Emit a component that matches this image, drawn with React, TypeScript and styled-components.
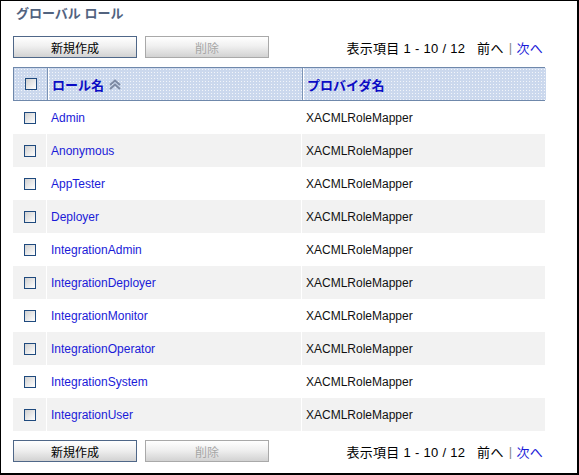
import React from 'react';
import styled, { createGlobalStyle } from 'styled-components';

const GlobalStyle = createGlobalStyle`
  body {
    margin: 0;
    background: #fff;
    font-family: "Liberation Sans", "Noto Sans CJK JP", sans-serif;
  }
`

const Frame = styled.div`
  box-sizing: border-box;
  width: 579px;
  height: 475px;
  border: 1px solid #000;
  border-right-width: 2px;
  border-bottom-width: 2px;
  padding-left: 12px;
  background: #fff;
`

const Title = styled.h1`
  margin: 0;
  padding: 5px 0 0 3px;
  font-size: 13px;
  line-height: 16px;
  font-weight: 700;
  color: #52637f;
`

const Toolbar = styled.div<{ $top: number }>`
  display: flex;
  align-items: center;
  width: 532px;
  height: 22px;
  margin-top: ${p => p.$top}px;
  gap: 8px;
`

const Button = styled.button<{ $disabled?: boolean }>`
  box-sizing: border-box;
  width: 124px;
  height: 22px;
  padding: 0;
  border: 1px solid ${p => (p.$disabled ? '#a9a9a9' : '#4f6788')};
  background: linear-gradient(#ffffff, #f0f0f0 45%, #d2d2d2);
  color: ${p => (p.$disabled ? '#a6a6a6' : '#000')};
  font-family: "Liberation Sans", "Noto Sans CJK JP", sans-serif;
  font-size: 12px;
  cursor: pointer;
`

const Paging = styled.div`
  margin-left: auto;
  padding-right: 2px;
  display: flex;
  align-items: center;
  font-size: 13px;
  letter-spacing: 0.3px;
  color: #000;
  white-space: pre;
`

const Sep = styled.span`
  color: #888;
  margin: 0 4px 0 5px;
`

const NextLink = styled.a`
  color: #1a1ad8;
  text-decoration: none;
`

const Table = styled.div`
  width: 532px;
  margin-top: 9px;
`

const HeaderRow = styled.div`
  display: grid;
  grid-template-columns: 33px 255px 244px;
  height: 34px;
  box-sizing: border-box;
  border-top: 1px solid #6f88ab;
  border-bottom: 1px solid #6f88ab;
  border-left: 1px solid #6f88ab;
`

const HeaderCell = styled.div<{ $first?: boolean }>`
  display: flex;
  align-items: center;
  justify-content: ${p => (p.$first ? 'center' : 'flex-start')};
  padding-left: ${p => (p.$first ? 0 : 4)}px;
  gap: 5px;
  background-color: #cbd8ed;
  background-image: radial-gradient(circle, rgba(255, 255, 255, 0.75) 0.7px, transparent 0.9px);
  background-size: 3px 3px;
  border-left: ${p => (p.$first ? 'none' : '1px solid #7c94b6')};
  box-shadow: ${p => (p.$first ? 'none' : 'inset 1px 0 0 #fff')};
  font-size: 13px;
  font-weight: 700;
  color: #0b0bc4;
`

const Row = styled.div`
  display: grid;
  grid-template-columns: 33px 255px 244px;
  height: 33px;
`

const Cell = styled.div<{ $even: boolean; $first?: boolean }>`
  display: flex;
  align-items: center;
  justify-content: ${p => (p.$first ? 'center' : 'flex-start')};
  padding-left: ${p => (p.$first ? 1 : 4)}px;
  margin-left: ${p => (p.$first ? 0 : 1)}px;
  background-color: ${p => (p.$even ? '#efefef' : '#fff')};
  background-image: ${p =>
    p.$even ? 'radial-gradient(circle, rgba(255,255,255,0.6) 0.5px, transparent 0.8px)' : 'none'};
  background-size: 2px 2px;
  font-size: 12px;
`

const RoleLink = styled.a`
  color: #1a1ad8;
  text-decoration: none;
`

const Provider = styled.span`
  color: #111;
`

const Check = styled.span`
  box-sizing: border-box;
  width: 12px;
  height: 12px;
  border: 1px solid #1f4a7e;
  background: linear-gradient(135deg, #d0d0d0, #ffffff);
`

const SortIcon = () => (
  <svg width="12" height="11" viewBox="0 0 12 11">
    <path d="M1 6 L6 1.5 L11 6 M1 10 L6 5.5 L11 10" fill="none" stroke="#7d8aa3" strokeWidth="2" />
  </svg>
)

const roles = [
  'Admin',
  'Anonymous',
  'AppTester',
  'Deployer',
  'IntegrationAdmin',
  'IntegrationDeployer',
  'IntegrationMonitor',
  'IntegrationOperator',
  'IntegrationSystem',
  'IntegrationUser',
]

function Actions({ top }: { top: number }) {
  return (
    <Toolbar $top={top}>
      <Button>新規作成</Button>
      <Button $disabled>削除</Button>
      <Paging>
        表示項目 1 - 10 / 12   前へ<Sep>|</Sep><NextLink href="#">次へ</NextLink>
      </Paging>
    </Toolbar>
  )
}

function App() {
  return (
    <Frame>
      <GlobalStyle />
      <Title>グローバル ロール</Title>
      <Actions top={14} />
      <Table>
        <HeaderRow>
          <HeaderCell $first><Check /></HeaderCell>
          <HeaderCell>ロール名<SortIcon /></HeaderCell>
          <HeaderCell>プロバイダ名</HeaderCell>
        </HeaderRow>
        {roles.map((r, i) => (
          <Row key={r}>
            <Cell $even={i % 2 === 1} $first><Check /></Cell>
            <Cell $even={i % 2 === 1}><RoleLink href="#">{r}</RoleLink></Cell>
            <Cell $even={i % 2 === 1}><Provider>XACMLRoleMapper</Provider></Cell>
          </Row>
        ))}
      </Table>
      <Actions top={9} />
    </Frame>
  );
}

export default App;
